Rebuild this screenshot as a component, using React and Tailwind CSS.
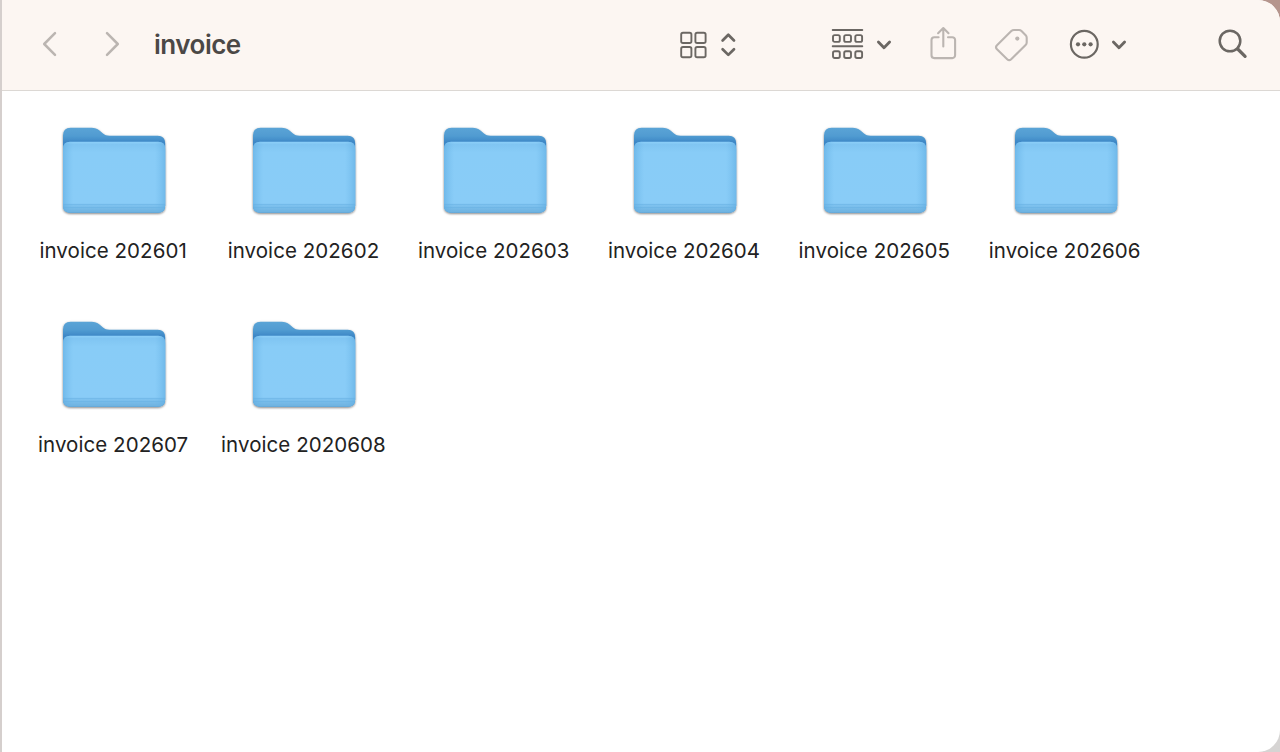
const folders = [
  "invoice 202601",
  "invoice 202602",
  "invoice 202603",
  "invoice 202604",
  "invoice 202605",
  "invoice 202606",
  "invoice 202607",
  "invoice 2020608",
];

function Icon({ width, height = 40, stroke = 2, className = "", children }) {
  return (
    <svg
      width={width}
      height={height}
      viewBox={`0 0 ${width} ${height}`}
      fill="none"
      stroke="currentColor"
      strokeWidth={stroke}
      strokeLinecap="round"
      strokeLinejoin="round"
      className={`shrink-0 ${className}`}
    >
      {children}
    </svg>
  );
}

function ChevronDown() {
  return (
    <Icon width={16} stroke={2.8}>
      <path d="M2.4 18l5.6 5.8 5.6-5.8" />
    </Icon>
  );
}

function Folder() {
  return (
    <svg width="110" height="96" viewBox="0 0 110 96" className="block">
      <defs>
        <linearGradient id="back" x1="0" y1="0" x2="0" y2="1">
          <stop offset="0" stopColor="#5ba4d6" />
          <stop offset="0.1" stopColor="#509bd1" />
          <stop offset="0.17" stopColor="#3d87c6" />
          <stop offset="1" stopColor="#3d87c6" />
        </linearGradient>
        <linearGradient id="front" x1="0" y1="0" x2="0" y2="1">
          <stop offset="0" stopColor="#8dd0f9" />
          <stop offset="0.04" stopColor="#80c5f2" />
          <stop offset="0.15" stopColor="#88ccf7" />
          <stop offset="0.86" stopColor="#89ccf7" />
          <stop offset="0.9" stopColor="#7dc1ee" />
          <stop offset="1" stopColor="#6cb1df" />
        </linearGradient>
        <linearGradient id="sides" x1="0" y1="0" x2="1" y2="0">
          <stop offset="0" stopColor="#5ba9df" stopOpacity="0.55" />
          <stop offset="0.1" stopColor="#6bb6e8" stopOpacity="0" />
          <stop offset="0.9" stopColor="#6bb6e8" stopOpacity="0" />
          <stop offset="1" stopColor="#5ba9df" stopOpacity="0.55" />
        </linearGradient>
        <filter id="shadow" x="-10%" y="-10%" width="120%" height="120%">
          <feDropShadow dx="0" dy="0.9" stdDeviation="0.9" floodColor="#000" floodOpacity="0.5" />
        </filter>
      </defs>
      <g filter="url(#shadow)">
        <path
          d="M4 12.5Q4 4.7 11.5 4.7H32.5C36 4.7 38 5.5 40.5 7.5L44 10.5C46 12 47.5 12.7 50.5 12.7H98.7Q106.2 12.7 106.2 20.5V82.5Q106.2 89.7 98.7 89.7H11.5Q4 89.7 4 82.5Z"
          fill="url(#back)"
        />
        <path
          d="M4 26Q4 18.7 11 18.7H99.2Q106.2 18.7 106.2 26V82.5Q106.2 89.7 98.7 89.7H11.5Q4 89.7 4 82.5Z"
          fill="url(#front)"
        />
      </g>
      <path
        d="M4 26Q4 18.7 11 18.7H99.2Q106.2 18.7 106.2 26V82.5Q106.2 89.7 98.7 89.7H11.5Q4 89.7 4 82.5Z"
        fill="url(#sides)"
      />
      <path d="M4.3 81.5H106M4.5 84.5H105.8" stroke="#66b0e2" strokeOpacity="0.55" strokeWidth="0.9" />
    </svg>
  );
}

function Toolbar() {
  return (
    <header className="flex h-[91px] shrink-0 items-start border-b border-[#dcd8d4] bg-[#fcf6f2] pt-6 text-[#6b6763]">
      <Icon width={20} stroke={2.5} className="ml-[37px] text-[#bbb5b1]">
        <path d="M16 9.2L5.2 20 16 30.8" />
      </Icon>
      <Icon width={20} stroke={2.5} className="ml-[43px] text-[#bbb5b1]">
        <path d="M5 9.2L15.8 20 5 30.8" />
      </Icon>
      <h1 className="mt-px ml-8 w-[524px] text-[26px] leading-[40px] font-semibold tracking-[-0.5px] text-[#4b4846]">
        invoice
      </h1>

      <Icon width={30} stroke={1.9}>
        <rect x="3.2" y="8.8" width="10.2" height="10.2" rx="1.8" />
        <rect x="17.4" y="8.8" width="10.2" height="10.2" rx="1.8" />
        <rect x="3.2" y="23" width="10.2" height="10.2" rx="1.8" />
        <rect x="17.4" y="23" width="10.2" height="10.2" rx="1.8" />
      </Icon>
      <Icon width={16} stroke={2.7} className="ml-3">
        <path d="M2.6 16.5l5.7-5.8 5.7 5.8M2.6 25.2l5.7 5.7 5.7-5.7" />
      </Icon>

      <Icon width={34} stroke={1.9} className="ml-[94px]">
        <path d="M2.7 6H32.3M2.7 22.2H32.3" />
        <rect x="3" y="11.1" width="6.8" height="6.8" rx="1.7" />
        <rect x="14.2" y="11.1" width="6.8" height="6.8" rx="1.7" />
        <rect x="25.3" y="11.1" width="6.8" height="6.8" rx="1.7" />
        <rect x="3" y="27.2" width="6.8" height="6.8" rx="1.7" />
        <rect x="14.2" y="27.2" width="6.8" height="6.8" rx="1.7" />
        <rect x="25.3" y="27.2" width="6.8" height="6.8" rx="1.7" />
      </Icon>
      <div className="ml-3">
        <ChevronDown />
      </div>

      <Icon width={30} stroke={2.1} className="ml-[36px] text-[#bbb5b1]">
        <path d="M10.6 13.2H6.3a2.8 2.8 0 0 0-2.8 2.8v15.3a2.8 2.8 0 0 0 2.8 2.8h18a2.8 2.8 0 0 0 2.8-2.8V16a2.8 2.8 0 0 0-2.8-2.8h-4.3" />
        <path d="M15.3 22.5V4.2M10.1 9.2L15.3 4l5.2 5.2" />
      </Icon>
      <Icon width={36} stroke={2.1} className="ml-[36px] text-[#bbb5b1]">
        <path d="M3 21.3L17.3 7.1Q18.5 6 20 6H25Q26.5 6 27.5 7L31.7 11.2Q32.7 12.2 32.7 13.7V18.4Q32.7 19.9 31.6 21L17.2 35.2Q15.2 37.1 13.2 35.2L3 25.3Q1 23.3 3 21.3Z" />
        <circle cx="23.3" cy="14.6" r="2.1" fill="currentColor" stroke="none" />
      </Icon>
      <Icon width={34} stroke={2.2} className="ml-[37px]">
        <circle cx="17.3" cy="20.3" r="13.4" />
        <g fill="currentColor" stroke="none">
          <circle cx="11" cy="20.3" r="2.1" />
          <circle cx="17.3" cy="20.3" r="2.1" />
          <circle cx="23.6" cy="20.3" r="2.1" />
        </g>
      </Icon>
      <div className="ml-[10px]">
        <ChevronDown />
      </div>
      <Icon width={34} stroke={2.5} className="ml-[88px]">
        <circle cx="15" cy="17" r="10.3" />
        <path d="M22.7 25l7.4 7.4" strokeWidth="3.2" />
      </Icon>
    </header>
  );
}

export default function App() {
  return (
    <div className="h-[752px] w-[1280px] overflow-hidden bg-linear-to-b from-[#b5958d] from-10% to-[#d6d4d3] to-20% font-['Inter',sans-serif]">
      <div className="flex h-full flex-col overflow-hidden rounded-r-[22px] border-l-2 border-[#d5cfcd] bg-white">
        <Toolbar />
        <main className="grid grid-cols-[repeat(6,190.3px)] auto-rows-[193.7px] pt-[32px] pl-[17px]">
          {folders.map((name) => (
            <div key={name} className="flex flex-col items-center">
              <Folder />
              <span className="mt-[18px] pr-[2px] text-[20.5px] leading-[28px] tracking-[0.06px] whitespace-nowrap text-[#222]">
                {name}
              </span>
            </div>
          ))}
        </main>
      </div>
    </div>
  );
}
